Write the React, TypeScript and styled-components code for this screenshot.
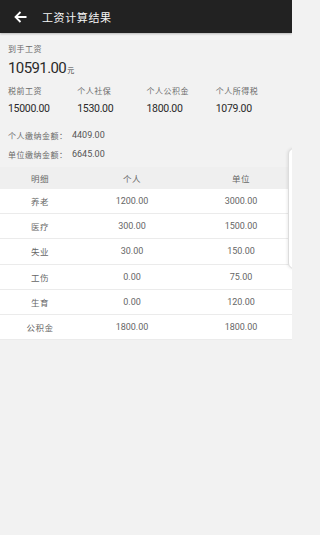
import * as React from 'react'
import styled, {createGlobalStyle} from 'styled-components'

const GlobalStyle = createGlobalStyle`
  html, body {
    margin: 0;
    padding: 0;
    background: #f2f2f2;
  }
  body {
    font-family: Roboto, "Noto Sans CJK SC", sans-serif;
  }
`

const Page = styled.div`
  position: relative;
  width: 292px;
  height: 535px;
  overflow: hidden;
  background: #f2f2f2;
`

const TopBar = styled.div`
  display: flex;
  align-items: center;
  height: 33px;
  padding-left: 13px;
  background: #222222;
  box-shadow: 0 1px 2px rgba(0, 0, 0, 0.25);
`

const BackButton = styled.button`
  display: flex;
  align-items: center;
  justify-content: center;
  width: 14px;
  height: 14px;
  padding: 0;
  margin-right: 15px;
  border: none;
  background: none;
`

const Title = styled.div`
  font-family: "Noto Sans CJK SC", sans-serif;
  font-size: 11px;
  letter-spacing: 0.6px;
  color: #f4f4f4;
`

const Summary = styled.div`
  padding: 10px 7px 0 8px;
`

const Caption = styled.div`
  font-family: "Noto Sans CJK SC", sans-serif;
  font-size: 8px;
  line-height: 12px;
  letter-spacing: 0.5px;
  color: #6a6a6a;
`

const Amount = styled.div`
  margin-top: 3px;
  font-size: 15px;
  line-height: 20px;
  letter-spacing: -0.6px;
  color: #2a2a2a;
`

const Unit = styled.span`
  font-family: "Noto Sans CJK SC", sans-serif;
  font-size: 7px;
  letter-spacing: 0;
  color: #444;
  margin-left: 1px;
`

const StatGrid = styled.div`
  display: grid;
  grid-template-columns: repeat(4, 1fr);
  row-gap: 5px;
  margin-top: 5px;
`

const StatValue = styled.div`
  font-size: 10.5px;
  line-height: 14px;
  letter-spacing: -0.3px;
  color: #2a2a2a;
`

const PayLines = styled.div`
  display: flex;
  flex-direction: column;
  gap: 5px;
  margin-top: 12px;
`

const PayLine = styled.div`
  display: flex;
  align-items: center;
  height: 14px;
`

const PayLabel = styled.span`
  font-family: "Noto Sans CJK SC", sans-serif;
  font-size: 8px;
  letter-spacing: 0.5px;
  color: #6a6a6a;
  width: 64px;
`

const PayValue = styled.span`
  font-size: 9px;
  color: #555;
`

const Table = styled.div`
  margin-top: 6px;
`

const Row = styled.div<{$head?: boolean}>`
  display: grid;
  grid-template-columns: 80px 104px 1fr;
  align-items: center;
  height: ${p => (p.$head ? '22px' : '25.2px')};
  box-sizing: border-box;
  background: ${p => (p.$head ? '#efefef' : '#ffffff')};
  border-bottom: ${p => (p.$head ? 'none' : '1px solid #ebebeb')};
`

const Cell = styled.div<{$cjk?: boolean}>`
  text-align: center;
  font-family: ${p => (p.$cjk ? '"Noto Sans CJK SC", sans-serif' : 'Roboto, sans-serif')};
  font-size: ${p => (p.$cjk ? '8.5px' : '9px')};
  letter-spacing: ${p => (p.$cjk ? '0.5px' : '0')};
  color: #666;

  &:last-child {
    padding-left: 6px;
  }
`

const SideHandle = styled.div`
  position: absolute;
  left: 288px;
  top: 148px;
  width: 24px;
  height: 119px;
  border: 1px solid #dcdcdc;
  border-radius: 6px;
  background: #ffffff;
  box-shadow: -1px 0 3px rgba(0, 0, 0, 0.08);
`

const stats = [
  {label: '税前工资', value: '15000.00'},
  {label: '个人社保', value: '1530.00'},
  {label: '个人公积金', value: '1800.00'},
  {label: '个人所得税', value: '1079.00'},
]

const rows = [
  ['养老', '1200.00', '3000.00'],
  ['医疗', '300.00', '1500.00'],
  ['失业', '30.00', '150.00'],
  ['工伤', '0.00', '75.00'],
  ['生育', '0.00', '120.00'],
  ['公积金', '1800.00', '1800.00'],
]

export default function App() {
  return (
    <Page>
      <GlobalStyle />
      <TopBar>
        <BackButton>
          <svg width='13' height='12' viewBox='0 0 13 12' fill='none'>
            <path d='M12.5 6H1.5M6.5 1L1.5 6l5 5' stroke='#fff' strokeWidth='1.8' />
          </svg>
        </BackButton>
        <Title>工资计算结果</Title>
      </TopBar>

      <Summary>
        <Caption>到手工资</Caption>
        <Amount>
          10591.00<Unit>元</Unit>
        </Amount>
        <StatGrid>
          {stats.map(s => (
            <Caption key={s.label}>{s.label}</Caption>
          ))}
          {stats.map(s => (
            <StatValue key={s.label}>{s.value}</StatValue>
          ))}
        </StatGrid>
        <PayLines>
          <PayLine>
            <PayLabel>个人缴纳金额：</PayLabel>
            <PayValue>4409.00</PayValue>
          </PayLine>
          <PayLine>
            <PayLabel>单位缴纳金额：</PayLabel>
            <PayValue>6645.00</PayValue>
          </PayLine>
        </PayLines>
      </Summary>

      <Table>
        <Row $head>
          <Cell $cjk>明细</Cell>
          <Cell $cjk>个人</Cell>
          <Cell $cjk>单位</Cell>
        </Row>
        {rows.map(r => (
          <Row key={r[0]}>
            <Cell $cjk>{r[0]}</Cell>
            <Cell>{r[1]}</Cell>
            <Cell>{r[2]}</Cell>
          </Row>
        ))}
      </Table>

      <SideHandle />
    </Page>
  )
}
